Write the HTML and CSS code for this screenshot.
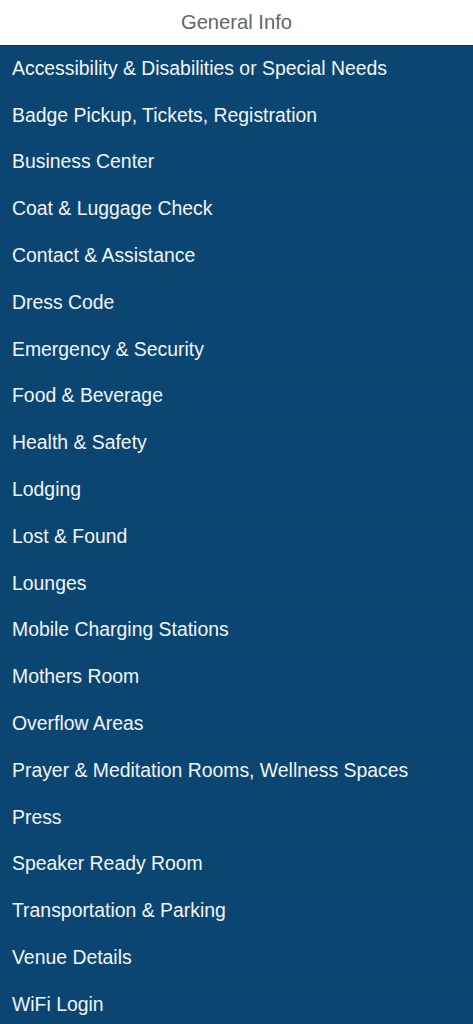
FILE: index.html
```html
<!DOCTYPE html>
<html lang="en">
<head>
    <meta charset="UTF-8">
    <meta name="viewport" content="width=device-width, initial-scale=1.0">
    <title>General Info</title>
    <link rel="stylesheet" href="styles.css">
</head>
<body>
    <div class="header">General Info</div>

    <ul class="info-list">
        <li class="info-item">Accessibility &amp; Disabilities or Special Needs</li>
        <li class="info-item">Badge Pickup, Tickets, Registration</li>
        <li class="info-item">Business Center</li>
        <li class="info-item">Coat &amp; Luggage Check</li>
        <li class="info-item">Contact &amp; Assistance</li>
        <li class="info-item">Dress Code</li>
        <li class="info-item">Emergency &amp; Security</li>
        <li class="info-item">Food &amp; Beverage</li>
        <li class="info-item">Health &amp; Safety</li>
        <li class="info-item">Lodging</li>
        <li class="info-item">Lost &amp; Found</li>
        <li class="info-item">Lounges</li>
        <li class="info-item">Mobile Charging Stations</li>
        <li class="info-item">Mothers Room</li>
        <li class="info-item">Overflow Areas</li>
        <li class="info-item">Prayer &amp; Meditation Rooms, Wellness Spaces</li>
        <li class="info-item">Press</li>
        <li class="info-item">Speaker Ready Room</li>
        <li class="info-item">Transportation &amp; Parking</li>
        <li class="info-item">Venue Details</li>
        <li class="info-item">WiFi Login</li>
    </ul>
</body>
</html>
```

FILE: styles.css
```css
body {
    margin: 0;
    padding: 0;
    font-family: 'Liberation Sans', Arial, sans-serif;
    background: #0b4673;
}

.header {
    position: relative;
    z-index: 1;
    height: 45px;
    background: white;
    color: #666;
    font-size: 20.2px;
    display: flex;
    align-items: center;
    justify-content: center;
    box-shadow: 0 1px 2px rgba(0,0,0,0.25);
}

.info-list {
    list-style: none;
    margin: 0;
    padding: 0;
}

.info-item {
    box-sizing: border-box;
    height: 46.8px;
    padding: 1px 12px 0;
    display: flex;
    align-items: center;
    color: #f2f4f7;
    font-size: 19.4px;
    border-bottom: 1px solid #093f69;
    white-space: nowrap;
}
```
